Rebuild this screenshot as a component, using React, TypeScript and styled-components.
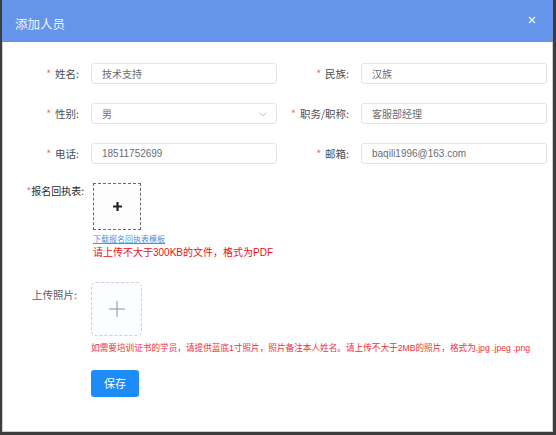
import React from "react";
import styled, { createGlobalStyle } from "styled-components";

const GlobalStyle = createGlobalStyle`
  html, body {
    margin: 0;
    padding: 0;
    background: #3d3d3d;
  }
  body {
    font-family: "Liberation Sans", "Noto Sans CJK SC", sans-serif;
  }
`;

const Frame = styled.div`
  width: 556px;
  height: 435px;
  box-sizing: border-box;
  padding: 0 3px 3px 2px;
`;

const Dialog = styled.div`
  height: 100%;
  box-sizing: border-box;
  background: #ffffff;
  border: 1px solid #cfcfcf;
  border-top: none;
  display: flex;
  flex-direction: column;
`;

const Header = styled.div`
  height: 42px;
  margin: 0 -1px;
  background: #6495ea;
  display: flex;
  align-items: center;
  justify-content: space-between;
  padding: 5px 17px 0 13px;
  box-sizing: border-box;
`;

const Title = styled.span`
  color: #f2f6ff;
  font-size: 12.5px;
  font-family: "Noto Sans CJK SC", sans-serif;
`;

const Close = styled.span`
  display: flex;
  margin-top: -8px;
`;

const Body = styled.div`
  padding: 21px 0 0 5px;
  display: flex;
  flex-direction: column;
`;

const FieldGrid = styled.div`
  display: grid;
  grid-template-columns: 270px 270px;
  row-gap: 19px;
`;

const Field = styled.div`
  display: flex;
  align-items: center;
`;

const Label = styled.label`
  width: 71px;
  margin-right: 12px;
  text-align: right;
  font-size: 10.5px;
  color: #4a4d52;
  font-family: "Noto Sans CJK SC", sans-serif;
  white-space: nowrap;
`;

const Star = styled.span<{ $tight?: boolean }>`
  color: #f56c6c;
  margin-right: ${(p) => (p.$tight ? "0" : "4px")};
`;

const InputBox = styled.div`
  position: relative;
  width: 186px;
  height: 21px;
  box-sizing: border-box;
  border: 1px solid #e2e4e9;
  border-radius: 3px;
  display: flex;
  align-items: center;
  padding-left: 10px;
  font-size: 10px;
  color: #6a6d72;
  font-family: "Liberation Sans", "Noto Sans CJK SC", sans-serif;
`;

const Chevron = styled.svg`
  position: absolute;
  right: 9px;
  top: 8px;
`;

const UploadRow = styled.div<{ $labelWidth: number; $gap: number; $top: number }>`
  display: flex;
  align-items: flex-start;
  margin-top: ${(p) => p.$top}px;
  gap: ${(p) => p.$gap}px;

  & > label {
    width: ${(p) => p.$labelWidth}px;
  }
`;

const UploadLabel = styled.label<{ $dark?: boolean }>`
  text-align: right;
  flex-shrink: 0;
  font-size: ${(p) => (p.$dark ? "10px" : "10.5px")};
  line-height: 14px;
  margin-top: ${(p) => (p.$dark ? "1px" : "6px")};
  color: ${(p) => (p.$dark ? "#2b2b2b" : "#5a5d62")};
  font-family: "Noto Sans CJK SC", sans-serif;
  white-space: nowrap;
`;

const UploadCol = styled.div`
  display: flex;
  flex-direction: column;
  align-items: flex-start;
`;

const DashedBox = styled.div<{ $w: number; $h: number; $soft?: boolean }>`
  width: ${(p) => p.$w}px;
  height: ${(p) => p.$h}px;
  box-sizing: border-box;
  border: 1px dashed ${(p) => (p.$soft ? "#c8d2de" : "#6a6a6a")};
  border-radius: ${(p) => (p.$soft ? "5px" : "0")};
  background: ${(p) => (p.$soft ? "#fbfdff" : "#fcfcfc")};
  display: flex;
  align-items: center;
  justify-content: center;
`;

const TemplateLink = styled.a`
  margin-top: 4px;
  font-size: 8px;
  line-height: 10px;
  color: #4a8fe8;
  text-decoration: underline;
  font-family: "Noto Sans CJK SC", sans-serif;
`;

const Hint = styled.div<{ $size: number; $color: string; $top: number }>`
  margin-top: ${(p) => p.$top}px;
  font-size: ${(p) => p.$size}px;
  line-height: ${(p) => p.$size + 4}px;
  color: ${(p) => p.$color};
  font-family: "Liberation Sans", "Noto Sans CJK SC", sans-serif;
  white-space: nowrap;
`;

const SaveButton = styled.button`
  margin: 15px 0 0 83px;
  width: 48px;
  height: 27px;
  border: none;
  border-radius: 3px;
  background: #1d8cf8;
  color: #ffffff;
  font-size: 11px;
  font-family: "Noto Sans CJK SC", sans-serif;
  padding: 0;
`;

const fields = [
  { label: "姓名:", value: "技术支持" },
  { label: "民族:", value: "汉族" },
  { label: "性别:", value: "男", select: true },
  { label: "职务/职称:", value: "客服部经理" },
  { label: "电话:", value: "18511752699" },
  { label: "邮箱:", value: "baqili1996@163.com" },
];

const App = () => {
  return (
    <>
      <GlobalStyle />
      <Frame>
        <Dialog>
          <Header>
            <Title>添加人员</Title>
            <Close>
              <svg width="8" height="8" viewBox="0 0 8 8">
                <path d="M1 1L7 7M7 1L1 7" stroke="#eef3ff" strokeWidth="1.3" />
              </svg>
            </Close>
          </Header>
          <Body>
            <FieldGrid>
              {fields.map((f) => (
                <Field key={f.label}>
                  <Label>
                    <Star>*</Star>
                    {f.label}
                  </Label>
                  <InputBox>
                    {f.value}
                    {f.select && (
                      <Chevron width="8" height="5" viewBox="0 0 8 5">
                        <path d="M0.5 0.5L4 4L7.5 0.5" fill="none" stroke="#c0c4cc" strokeWidth="1" />
                      </Chevron>
                    )}
                  </InputBox>
                </Field>
              ))}
            </FieldGrid>

            <UploadRow $labelWidth={76} $gap={9} $top={19}>
              <UploadLabel $dark>
                <Star $tight>*</Star>
                报名回执表:
              </UploadLabel>
              <UploadCol>
                <DashedBox $w={48} $h={47}>
                  <svg width="9" height="9" viewBox="0 0 9 9">
                    <path d="M4.5 0V9M0 4.5H9" stroke="#222" strokeWidth="2.2" />
                  </svg>
                </DashedBox>
                <TemplateLink>下载报名回执表模板</TemplateLink>
                <Hint $size={10} $color="#e8101a" $top={2}>
                  请上传不大于300KB的文件，格式为PDF
                </Hint>
              </UploadCol>
            </UploadRow>

            <UploadRow $labelWidth={69} $gap={14} $top={22}>
              <UploadLabel>上传照片:</UploadLabel>
              <UploadCol>
                <DashedBox $w={51} $h={54} $soft>
                  <svg width="16" height="16" viewBox="0 0 16 16">
                    <path d="M8 0V16M0 8H16" stroke="#8c939d" strokeWidth="1" />
                  </svg>
                </DashedBox>
                <Hint $size={8.65} $color="#f0303a" $top={6}>
                  如需要培训证书的学员，请提供蓝底1寸照片，照片备注本人姓名。请上传不大于2MB的照片，格式为.jpg .jpeg .png
                </Hint>
              </UploadCol>
            </UploadRow>

            <SaveButton>保存</SaveButton>
          </Body>
        </Dialog>
      </Frame>
    </>
  );
};

export default App;
